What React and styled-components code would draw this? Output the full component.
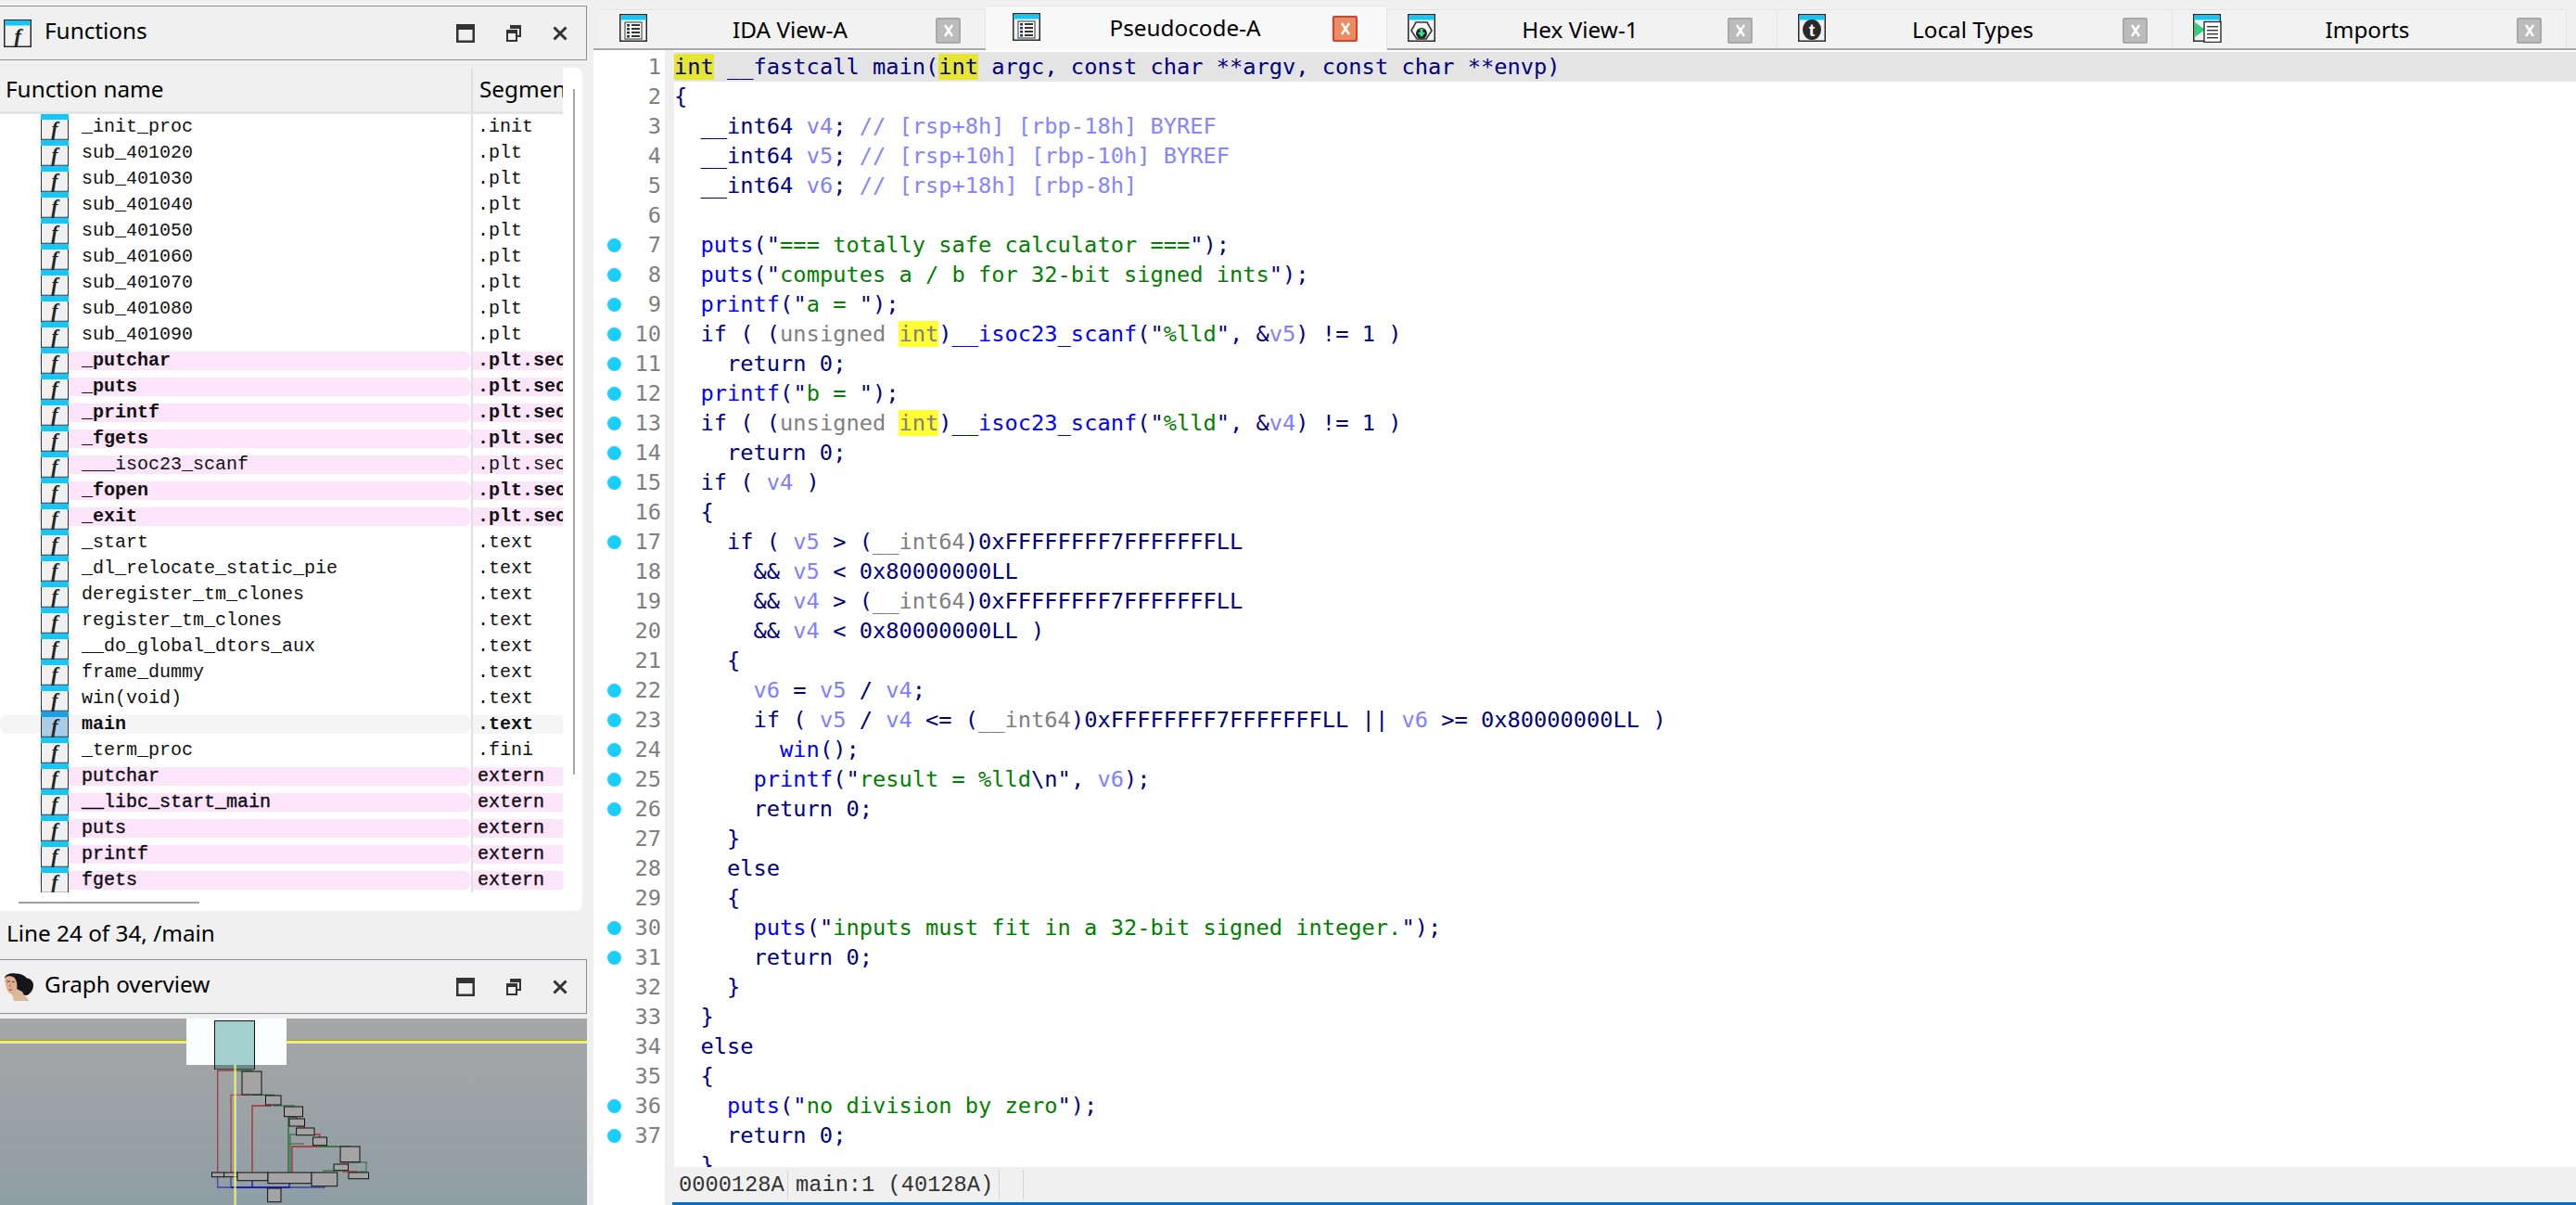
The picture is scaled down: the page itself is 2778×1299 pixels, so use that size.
import React from "react";
import styled, { createGlobalStyle } from "styled-components";

const UI_FONT = `"Noto Sans", "Open Sans", sans-serif`;
const MONO_FONT = `"DejaVu Sans Mono", "Liberation Mono", monospace`;
const LIST_FONT = `"Liberation Mono", monospace`;

const GlobalStyle = createGlobalStyle`
  html, body { margin: 0; padding: 0; background: #f0f0f0; }
  #root { width: 2778px; height: 1299px; overflow: hidden; }
`;

const Page = styled.div`
  display: grid;
  grid-template-columns: 633px 1fr;
  column-gap: 7px;
  height: 1299px;
  background: #f0f0f0;
  color: #000;
  font-family: ${UI_FONT};
`;

/* ---------- left column ---------- */

const LeftColumn = styled.div`
  display: flex;
  flex-direction: column;
  padding-top: 6px;
  min-width: 0;
`;

const TitleBar = styled.div`
  display: flex;
  align-items: center;
  box-sizing: border-box;
  height: 59px;
  padding: 0 20px 0 4px;
  border: 1px solid #8a9098;
  border-left: 0;
  background: #f0f0f0;
`;

const TitleText = styled.span`
  margin-left: ${(p) => p.$gap}px;
  font-size: 24.3px;
  line-height: 1;
  position: relative;
  top: -2px;
  flex: 1;
`;

const WindowButtons = styled.div`
  display: flex;
  align-items: center;
  gap: 34px;
`;

const Card = styled.div`
  position: relative;
  height: 909px;
  margin: 8px 5px 0 0;
  background: #fff;
  border-radius: 0 8px 8px 0;
`;

const HeaderRow = styled.div`
  display: grid;
  grid-template-columns: 510px 97px;
  width: 607px;
  height: 47px;
  background: #f0f0f0;
  border-bottom: 3px solid #e4e4e4;
  box-sizing: content-box;
  font-size: 24.3px;
`;

const HeaderCell = styled.div`
  display: flex;
  align-items: center;
  overflow: hidden;
  white-space: nowrap;
  padding: 0 0 3px ${(p) => p.$inset}px;
  height: 47px;
  border-right: ${(p) => (p.$divider ? "2px solid #e0e0e0" : "0")};
  box-sizing: border-box;
`;

const ListViewport = styled.div`
  position: relative;
  width: 607px;
  height: 839px;
  overflow: hidden;
`;

const ColumnDivider = styled.div`
  position: absolute;
  top: 0;
  bottom: 0;
  left: 508px;
  width: 2px;
  background: #e0e0e0;
`;

const rowTints = { pink: "#fce4fb", current: "#f5f5f5" };

const Row = styled.div`
  display: grid;
  grid-template-columns: 510px 97px;
  height: 28px;
  font-family: ${LIST_FONT};
  font-size: 20px;
  font-weight: ${(p) => (p.$bold ? 700 : 400)};
  color: #111;
  -webkit-text-stroke: ${(p) => (p.$strong ? "0.35px #000" : "0")};
`;

const NameCell = styled.div`
  position: relative;
  display: flex;
  align-items: center;
  padding-left: 44px;
  gap: 14px;
  white-space: nowrap;

  &::before {
    content: "";
    display: ${(p) => (p.$tint ? "block" : "none")};
    position: absolute;
    top: 4px;
    bottom: 4px;
    left: ${(p) => (p.$tint === "current" ? "0" : "42px")};
    right: 2px;
    border-radius: 8px;
    background: ${(p) => rowTints[p.$tint]};
  }

  & > * { position: relative; }
  & > span { padding-bottom: 2px; }
`;

const SegCell = styled.div`
  position: relative;
  display: flex;
  align-items: center;
  padding: 0 0 2px 5px;
  white-space: nowrap;
  overflow: hidden;

  &::before {
    content: "";
    display: ${(p) => (p.$tint ? "block" : "none")};
    position: absolute;
    top: 4px;
    bottom: 4px;
    left: 0;
    right: 0;
    background: ${(p) => rowTints[p.$tint]};
  }

  & > span { position: relative; }
`;

const VScroll = styled.div`
  position: absolute;
  left: 618px;
  top: 23px;
  width: 2px;
  height: 739px;
  background: #a8a8ac;
`;

const HScroll = styled.div`
  position: absolute;
  left: 20px;
  top: 899px;
  width: 195px;
  height: 2px;
  background: #a0a0a4;
`;

const StatusLine = styled.div`
  display: flex;
  align-items: center;
  box-sizing: border-box;
  height: 52px;
  padding: 0 0 5px 7px;
  font-size: 24.3px;
`;

const GraphPanel = styled.div`
  height: 201px;
  margin-top: 5px;
  background: linear-gradient(#a6a6a6, #8f9ea5);

  svg { display: block; }
`;

/* ---------- right column ---------- */

const RightColumn = styled.div`
  display: flex;
  flex-direction: column;
  min-width: 0;
  height: 1299px;
`;

const TabBar = styled.div`
  display: flex;
  align-items: flex-end;
  flex: none;
  box-sizing: border-box;
  height: 54px;
  padding-left: 6px;
  border-bottom: 2px solid #a9a9a9;
`;

const Tab = styled.div`
  display: grid;
  grid-template-columns: 1fr auto 1fr;
  align-items: center;
  box-sizing: border-box;
  width: ${(p) => p.$width}px;
  height: ${(p) => (p.$active ? 48 : 42)}px;
  margin-bottom: ${(p) => (p.$active ? -2 : 0)}px;
  padding: 0 ${(p) => (p.$active ? 31 : 26)}px 0 ${(p) => (p.$active ? 29 : 22)}px;
  background: ${(p) => (p.$active ? "#f9f9f9" : "#f2f2f2")};
  border-top: 1px solid #e6e6e6;
  border-right: 1px solid #e6e6e6;
  font-size: 24.3px;
`;

const TabIcon = styled.div`
  display: flex;
  margin-top: ${(p) => (p.$active ? -4 : -3)}px;
`;

const TabLabel = styled.span`
  white-space: nowrap;
  position: relative;
  top: ${(p) => (p.$active ? -1 : 0)}px;
`;

const TabClose = styled.div`
  justify-self: end;
  display: flex;
  align-items: center;
  justify-content: center;
  box-sizing: border-box;
  width: 27px;
  height: 28px;
  margin-top: ${(p) => (p.$active ? 0 : 2)}px;
  border: 2px solid ${(p) => (p.$active ? "#dc3b2d" : "#a8a8a8")};
  border-radius: 2px;
  background: ${(p) => (p.$active ? "#ec8c62" : "#bcbcbc")};
`;

const CodeBody = styled.div`
  display: flex;
  flex: 1;
  min-height: 0;
  background: #fff;
`;

const Gutter = styled.div`
  flex: none;
  width: 77px;
  padding-top: 2px;
  border-right: 10px solid #efefef;
  overflow: hidden;
`;

const GutterRow = styled.div`
  display: flex;
  align-items: center;
  box-sizing: border-box;
  height: 32px;
  padding: 0 4px 0 15px;
  font-family: ${MONO_FONT};
  font-size: 23.7px;
  color: #7f7f7f;
`;

const Dot = styled.span`
  width: 15px;
  height: 15px;
  border-radius: 50%;
  background: ${(p) => (p.$on ? "#19cfff" : "transparent")};
`;

const LineNo = styled.span`
  margin-left: auto;
`;

const CodePane = styled.div`
  display: flex;
  flex-direction: column;
  flex: 1;
  min-width: 0;
`;

const CodeLines = styled.div`
  flex: 1;
  min-height: 0;
  padding-top: 2px;
  overflow: hidden;
`;

const CodeLine = styled.div`
  height: 32px;
  line-height: 32px;
  white-space: pre;
  font-family: ${MONO_FONT};
  font-size: 23.7px;
  color: #000080;
  background: ${(p) => (p.$current ? "#e4e4e4" : "transparent")};
`;

const tokenColors = {
  plain: "#000080",
  variable: "#7f7fff",
  comment: "#8585ff",
  string: "#008000",
  func: "#0000ff",
  cast: "#808080",
};

const Tok = styled.span`
  color: ${(p) => tokenColors[p.$kind]};
  background: ${(p) => p.$mark || "transparent"};
`;

const BottomBar = styled.div`
  display: flex;
  flex: none;
  align-items: center;
  box-sizing: border-box;
  height: 41px;
  margin-left: -2px;
  padding: 0 0 3px 7px;
  background: linear-gradient(#f0f0f0 38px, #0a6cc0 38px);
  font-family: ${LIST_FONT};
  font-size: 23.7px;
  color: #333;
`;

const BottomCell = styled.span`
  display: flex;
  align-items: center;
  box-sizing: border-box;
  width: ${(p) => p.$width}px;
  height: 32px;
  padding-left: ${(p) => p.$inset || 0}px;
  border-right: 1px solid #d4d4d4;
  white-space: pre;
`;

/* ---------- icons ---------- */

const IconFrame = ({ children, band = "#0fc8fb", fill = "#f1f1f1", width = 30, height = 30 }) => (
  <svg width={width} height={height} viewBox="0 0 30 30">
    <rect x="0.75" y="0.75" width="28.5" height="28.5" fill={fill} stroke="#2b2b2b" strokeWidth="1.5" />
    <rect x="1.5" y="1.5" width="27" height="5" fill={band} />
    {children}
  </svg>
);

const FuncIcon = ({ current }) => (
  <svg width="30" height="28" viewBox="0 0 30 28">
    <rect x="0.5" y="0" width="29" height="28" fill={current ? "#a9cce9" : "#f0f0f0"} />
    <path d="M0.5 0V28M29.5 0V28M0 27.25H30" stroke="#333" strokeWidth="1" fill="none" />
    <rect x="0" y="0" width="30" height="6" fill={current ? "#14a2ea" : "#10c8fa"} />
    <text x="15" y="23" textAnchor="middle" fontFamily="Liberation Serif" fontStyle="italic" fontWeight="700" fontSize="22" fill="#222">f</text>
  </svg>
);

const TitleFuncIcon = () => (
  <IconFrame>
    <text x="15" y="26" textAnchor="middle" fontFamily="Liberation Serif" fontStyle="italic" fontWeight="700" fontSize="23" fill="#222">f</text>
  </IconFrame>
);

const ListIcon = () => (
  <IconFrame>
    <rect x="6" y="9" width="18" height="18" fill="#fff" stroke="#333" strokeWidth="1" />
    {[12, 16, 20, 24].map((y) => (
      <g key={y}>
        <rect x="8" y={y - 1} width="3" height="2.5" fill="#22364e" />
        <rect x="13" y={y - 1} width="9" height="2" fill="#333" />
      </g>
    ))}
  </IconFrame>
);

const HexIcon = () => (
  <IconFrame>
    <path d="M9 9H21L26 18L20 27H10L4 18Z" fill="#f7f7f7" stroke="#333" strokeWidth="1.6" />
    <circle cx="15" cy="21" r="6" fill="#222" />
    <path d="M13.5 16H16.5V20H19L15 25L11 20H13.5Z" fill="#2ee87f" />
  </IconFrame>
);

const TypesIcon = () => (
  <IconFrame>
    <ellipse cx="15" cy="17" rx="10" ry="11" fill="#2a2a2a" />
    <text x="15" y="24" textAnchor="middle" fontFamily="Liberation Sans" fontWeight="700" fontSize="19" fill="#fff">t</text>
  </IconFrame>
);

const ImportsIcon = () => (
  <svg width="31" height="31" viewBox="0 0 31 31">
    <rect x="0.75" y="0.75" width="28.5" height="28.5" fill="#f1f1f1" stroke="#2b2b2b" strokeWidth="1.5" />
    <rect x="1.5" y="1.5" width="27" height="5" fill="#0fc8fb" />
    <path d="M2 9L13 17L2 25Z" fill="#2bd37a" />
    <rect x="12" y="8.5" width="18" height="22" fill="#fff" stroke="#2b2b2b" strokeWidth="1.4" />
    {[13, 17, 21, 25].map((y) => (
      <rect key={y} x="15" y={y} width="12" height="1.4" fill="#333" />
    ))}
  </svg>
);

const CloseGlyph = () => (
  <svg width="12" height="16" viewBox="0 0 12 16">
    <path d="M2 2L10 14M10 2L2 14" stroke="#fff" strokeWidth="2.4" />
  </svg>
);

const MaxIcon = () => (
  <svg width="20" height="20" viewBox="0 0 20 20">
    <rect x="1.25" y="1.25" width="17.5" height="17.5" fill="none" stroke="#333" strokeWidth="2.5" />
    <rect x="1" y="1" width="18" height="5" fill="#333" />
  </svg>
);

const RestoreIcon = () => (
  <svg width="16" height="18" viewBox="0 0 16 18">
    <path d="M5 4V1H15V12H11" fill="none" stroke="#333" strokeWidth="2" />
    <rect x="1" y="6" width="10" height="11" fill="none" stroke="#333" strokeWidth="2" />
    <rect x="1" y="6" width="10" height="3" fill="#333" />
    <rect x="5" y="1" width="10" height="3" fill="#333" />
  </svg>
);

const XIcon = () => (
  <svg width="16" height="16" viewBox="0 0 16 16">
    <path d="M1.5 1.5L14.5 14.5M14.5 1.5L1.5 14.5" stroke="#333" strokeWidth="3" />
  </svg>
);

const Portrait = () => (
  <svg width="32" height="30" viewBox="0 0 32 30">
    <path d="M1 5C2 1 8 -0.5 13 0.5C18 0.5 22 2 25 5.5C29 6 32 9 32 13C32 18 29 22 25 24C21 24 17 22 15 19Z" fill="#15151b" />
    <path d="M9 23L14 17L20 20L22 24C24 25 26 27 27 30H11Z" fill="#dcb99a" />
    <path d="M1.5 5C4 2.5 9 3 11.5 5C14 8 15 13 14 18C13 21 11 23 9 23C6 22 3.5 19 2.5 15C1.5 11 1 8 1.5 5Z" fill="#e0b090" />
    <path d="M3.5 9H7M9 9.5H11.5" stroke="#4a2e22" strokeWidth="1.2" />
    <path d="M7 11.5L6.5 14.5H8" stroke="#b07a5e" strokeWidth="0.8" fill="none" />
    <path d="M5.5 18H9" stroke="#a8463c" strokeWidth="1.2" />
  </svg>
);

/* ---------- graph overview ---------- */

const boxes = [
  [261, 57, 21, 25], [286.5, 83, 16.5, 10], [306.5, 95, 20, 10.7], [312, 108, 16.5, 8],
  [319.6, 118, 19.4, 7.7], [337.5, 128, 15, 8.7], [367, 138, 21, 16.7], [360, 157, 15.5, 6.7],
  [376, 166, 21.5, 6.7], [228.5, 166, 13, 4.7], [241.6, 166, 14.4, 4.7], [256, 166, 33, 8.7],
  [289, 166, 47, 11.7], [336, 166, 27.7, 14.7], [288.6, 183, 14.4, 14.7],
];

const edges = [
  ["#a83a3e", "M234.7 166V56H253"],
  ["#a8484c", "M249 166V82.3H271"],
  ["#b02a2a", "M272 166V94H293"],
  ["#2f6f3f", "M253 56H272V57"],
  ["#1f6f2f", "M272 82.3H295V83"],
  ["#3f7f50", "M295 94H317V95"],
  ["#1f6a2f", "M311 166V106H320"],
  ["#3d7a4d", "M313 166V125H328"],
  ["#3d7a4d", "M312 135H328"],
  ["#a8343a", "M318 106L321 108M321 116H328V118M329 125H345V128"],
  ["#a82a2a", "M315 166V138H344"],
  ["#1f6a2f", "M344 138H378"],
  ["#a83a3e", "M368 155H376V157M369 165H386V166"],
  ["#3f7f50", "M378 155H395V165H388M349 166V164H368"],
  ["#3a45a8", "M234.7 171V182H350V181"],
  ["#3a45a8", "M249 171V182"],
  ["#1010b0", "M249 182H298M272 175V182M312 178V182H296"],
];

const GraphOverview = () => (
  <svg width="633" height="201" viewBox="0 0 633 201">
    <rect x="201" y="0" width="108" height="50" fill="#fbfeff" />
    <rect x="0" y="23" width="201" height="1" fill="#a8a800" />
    <rect x="0" y="24" width="201" height="1.4" fill="#ffff00" />
    <rect x="0" y="25.4" width="201" height="1.2" fill="#fff" />
    <rect x="309" y="23" width="324" height="1" fill="#a8a800" />
    <rect x="309" y="24" width="324" height="1.4" fill="#ffff00" />
    <rect x="309" y="25.4" width="324" height="1.2" fill="#fff" />
    {edges.map(([color, d]) => (
      <path key={d} d={d} fill="none" stroke={color} strokeWidth="1.3" />
    ))}
    <rect x="231.5" y="2.5" width="43" height="52" fill="#a3cfcf" stroke="#111" strokeWidth="1" />
    <rect x="232" y="50" width="42" height="4.5" fill="#6c8a8a" />
    {boxes.map(([x, y, w, h]) => (
      <rect key={`${x}-${y}`} x={x} y={y} width={w} height={h} fill="#a4a4a4" stroke="#111" strokeWidth="1" />
    ))}
    <rect x="252.5" y="50" width="1.2" height="151" fill="#ffff00" />
    <rect x="253.7" y="50" width="0.8" height="151" fill="#fff" />
  </svg>
);

/* ---------- data ---------- */

const plain = (name, seg) => ({ name, seg });
const stub = (name) => ({ name, seg: ".plt.sec", tint: "pink", bold: true });
const ext = (name) => ({ name, seg: "extern", tint: "pink", strong: true });

const functions = [
  plain("_init_proc", ".init"),
  ...["20", "30", "40", "50", "60", "70", "80", "90"].map((n) => plain(`sub_4010${n}`, ".plt")),
  stub("_putchar"),
  stub("_puts"),
  stub("_printf"),
  stub("_fgets"),
  { name: "___isoc23_scanf", seg: ".plt.sec", tint: "pink" },
  stub("_fopen"),
  stub("_exit"),
  plain("_start", ".text"),
  plain("_dl_relocate_static_pie", ".text"),
  plain("deregister_tm_clones", ".text"),
  plain("register_tm_clones", ".text"),
  plain("__do_global_dtors_aux", ".text"),
  plain("frame_dummy", ".text"),
  plain("win(void)", ".text"),
  { name: "main", seg: ".text", tint: "current", bold: true, current: true },
  plain("_term_proc", ".fini"),
  ext("putchar"),
  ext("__libc_start_main"),
  ext("puts"),
  ext("printf"),
  ext("fgets"),
];

const tabs = [
  { label: "IDA View-A", width: 417, icon: <ListIcon /> },
  { label: "Pseudocode-A", width: 433, icon: <ListIcon />, active: true },
  { label: "Hex View-1", width: 421, icon: <HexIcon /> },
  { label: "Local Types", width: 426, icon: <TypesIcon /> },
  { label: "Imports", width: 425, icon: <ImportsIcon /> },
];

const source = `int __fastcall main(int argc, const char **argv, const char **envp)
{
  __int64 v4; // [rsp+8h] [rbp-18h] BYREF
  __int64 v5; // [rsp+10h] [rbp-10h] BYREF
  __int64 v6; // [rsp+18h] [rbp-8h]

  puts("=== totally safe calculator ===");
  puts("computes a / b for 32-bit signed ints");
  printf("a = ");
  if ( (unsigned int)__isoc23_scanf("%lld", &v5) != 1 )
    return 0;
  printf("b = ");
  if ( (unsigned int)__isoc23_scanf("%lld", &v4) != 1 )
    return 0;
  if ( v4 )
  {
    if ( v5 > (__int64)0xFFFFFFFF7FFFFFFFLL
      && v5 < 0x80000000LL
      && v4 > (__int64)0xFFFFFFFF7FFFFFFFLL
      && v4 < 0x80000000LL )
    {
      v6 = v5 / v4;
      if ( v5 / v4 <= (__int64)0xFFFFFFFF7FFFFFFFLL || v6 >= 0x80000000LL )
        win();
      printf("result = %lld\\n", v6);
      return 0;
    }
    else
    {
      puts("inputs must fit in a 32-bit signed integer.");
      return 0;
    }
  }
  else
  {
    puts("no division by zero");
    return 0;
  }`.split("\n");

const dotted = new Set([7, 8, 9, 10, 11, 12, 13, 14, 15, 17, 22, 23, 24, 25, 26, 30, 31, 36, 37]);

// splits one decompiled line into coloured pieces
const TOKEN = /(\/\/.*$)|"([^"]*)"|\b(v[456])\b|\b(puts|printf|win|__isoc23_scanf)\b|(__int64)(?=\))|(unsigned)|\b(int)\b/g;

function tokenize(line, index) {
  const out = [];
  let last = 0;
  for (const m of line.matchAll(TOKEN)) {
    if (m.index > last) out.push(["plain", line.slice(last, m.index)]);
    if (m[1]) out.push(["comment", m[1]]);
    else if (m[2] !== undefined) {
      const [text, tail] = m[2].split("\\n");
      out.push(["plain", '"'], ["string", text]);
      out.push(["plain", tail !== undefined ? '\\n"' : '"']);
    } else if (m[3]) out.push(["variable", m[3]]);
    else if (m[4]) out.push(["func", m[4]]);
    else if (m[5] || m[6]) out.push(["cast", m[0]]);
    else if (index === 0) out.push(["plain", "int", "#e6e632"]);
    else out.push(["cast", "int", "#ffff33"]);
    last = m.index + m[0].length;
  }
  if (last < line.length) out.push(["plain", line.slice(last)]);
  return out;
}

const WindowControls = () => (
  <WindowButtons>
    <MaxIcon />
    <RestoreIcon />
    <XIcon />
  </WindowButtons>
);

export default function App() {
  return (
    <Page>
      <GlobalStyle />
      <LeftColumn>
        <TitleBar>
          <TitleFuncIcon />
          <TitleText $gap={14}>Functions</TitleText>
          <WindowControls />
        </TitleBar>
        <Card>
          <HeaderRow>
            <HeaderCell $inset={6} $divider>Function name</HeaderCell>
            <HeaderCell $inset={7}>Segment</HeaderCell>
          </HeaderRow>
          <ListViewport>
            {functions.map((fn) => (
              <Row key={fn.name} $bold={fn.bold} $strong={fn.strong}>
                <NameCell $tint={fn.tint}>
                  <FuncIcon current={fn.current} />
                  <span>{fn.name}</span>
                </NameCell>
                <SegCell $tint={fn.tint}>
                  <span>{fn.seg}</span>
                </SegCell>
              </Row>
            ))}
            <ColumnDivider />
          </ListViewport>
          <VScroll />
          <HScroll />
        </Card>
        <StatusLine>Line 24 of 34, /main</StatusLine>
        <TitleBar>
          <Portrait />
          <TitleText $gap={12}>Graph overview</TitleText>
          <WindowControls />
        </TitleBar>
        <GraphPanel>
          <GraphOverview />
        </GraphPanel>
      </LeftColumn>

      <RightColumn>
        <TabBar>
          {tabs.map((tab) => (
            <Tab key={tab.label} $width={tab.width} $active={tab.active}>
              <TabIcon $active={tab.active}>{tab.icon}</TabIcon>
              <TabLabel $active={tab.active}>{tab.label}</TabLabel>
              <TabClose $active={tab.active}>
                <CloseGlyph />
              </TabClose>
            </Tab>
          ))}
        </TabBar>
        <CodeBody>
          <Gutter>
            {source.slice(0, 37).map((_, i) => (
              <GutterRow key={i}>
                <Dot $on={dotted.has(i + 1)} />
                <LineNo>{i + 1}</LineNo>
              </GutterRow>
            ))}
          </Gutter>
          <CodePane>
            <CodeLines>
              {source.map((line, i) => (
                <CodeLine key={i} $current={i === 0}>
                  {tokenize(line, i).map(([kind, text, mark], j) => (
                    <Tok key={j} $kind={kind} $mark={mark}>{text}</Tok>
                  ))}
                </CodeLine>
              ))}
            </CodeLines>
            <BottomBar>
              <BottomCell $width={118}>0000128A</BottomCell>
              <BottomCell $width={228} $inset={8}>main:1 (40128A)</BottomCell>
              <BottomCell $width={26} />
            </BottomBar>
          </CodePane>
        </CodeBody>
      </RightColumn>
    </Page>
  );
}
